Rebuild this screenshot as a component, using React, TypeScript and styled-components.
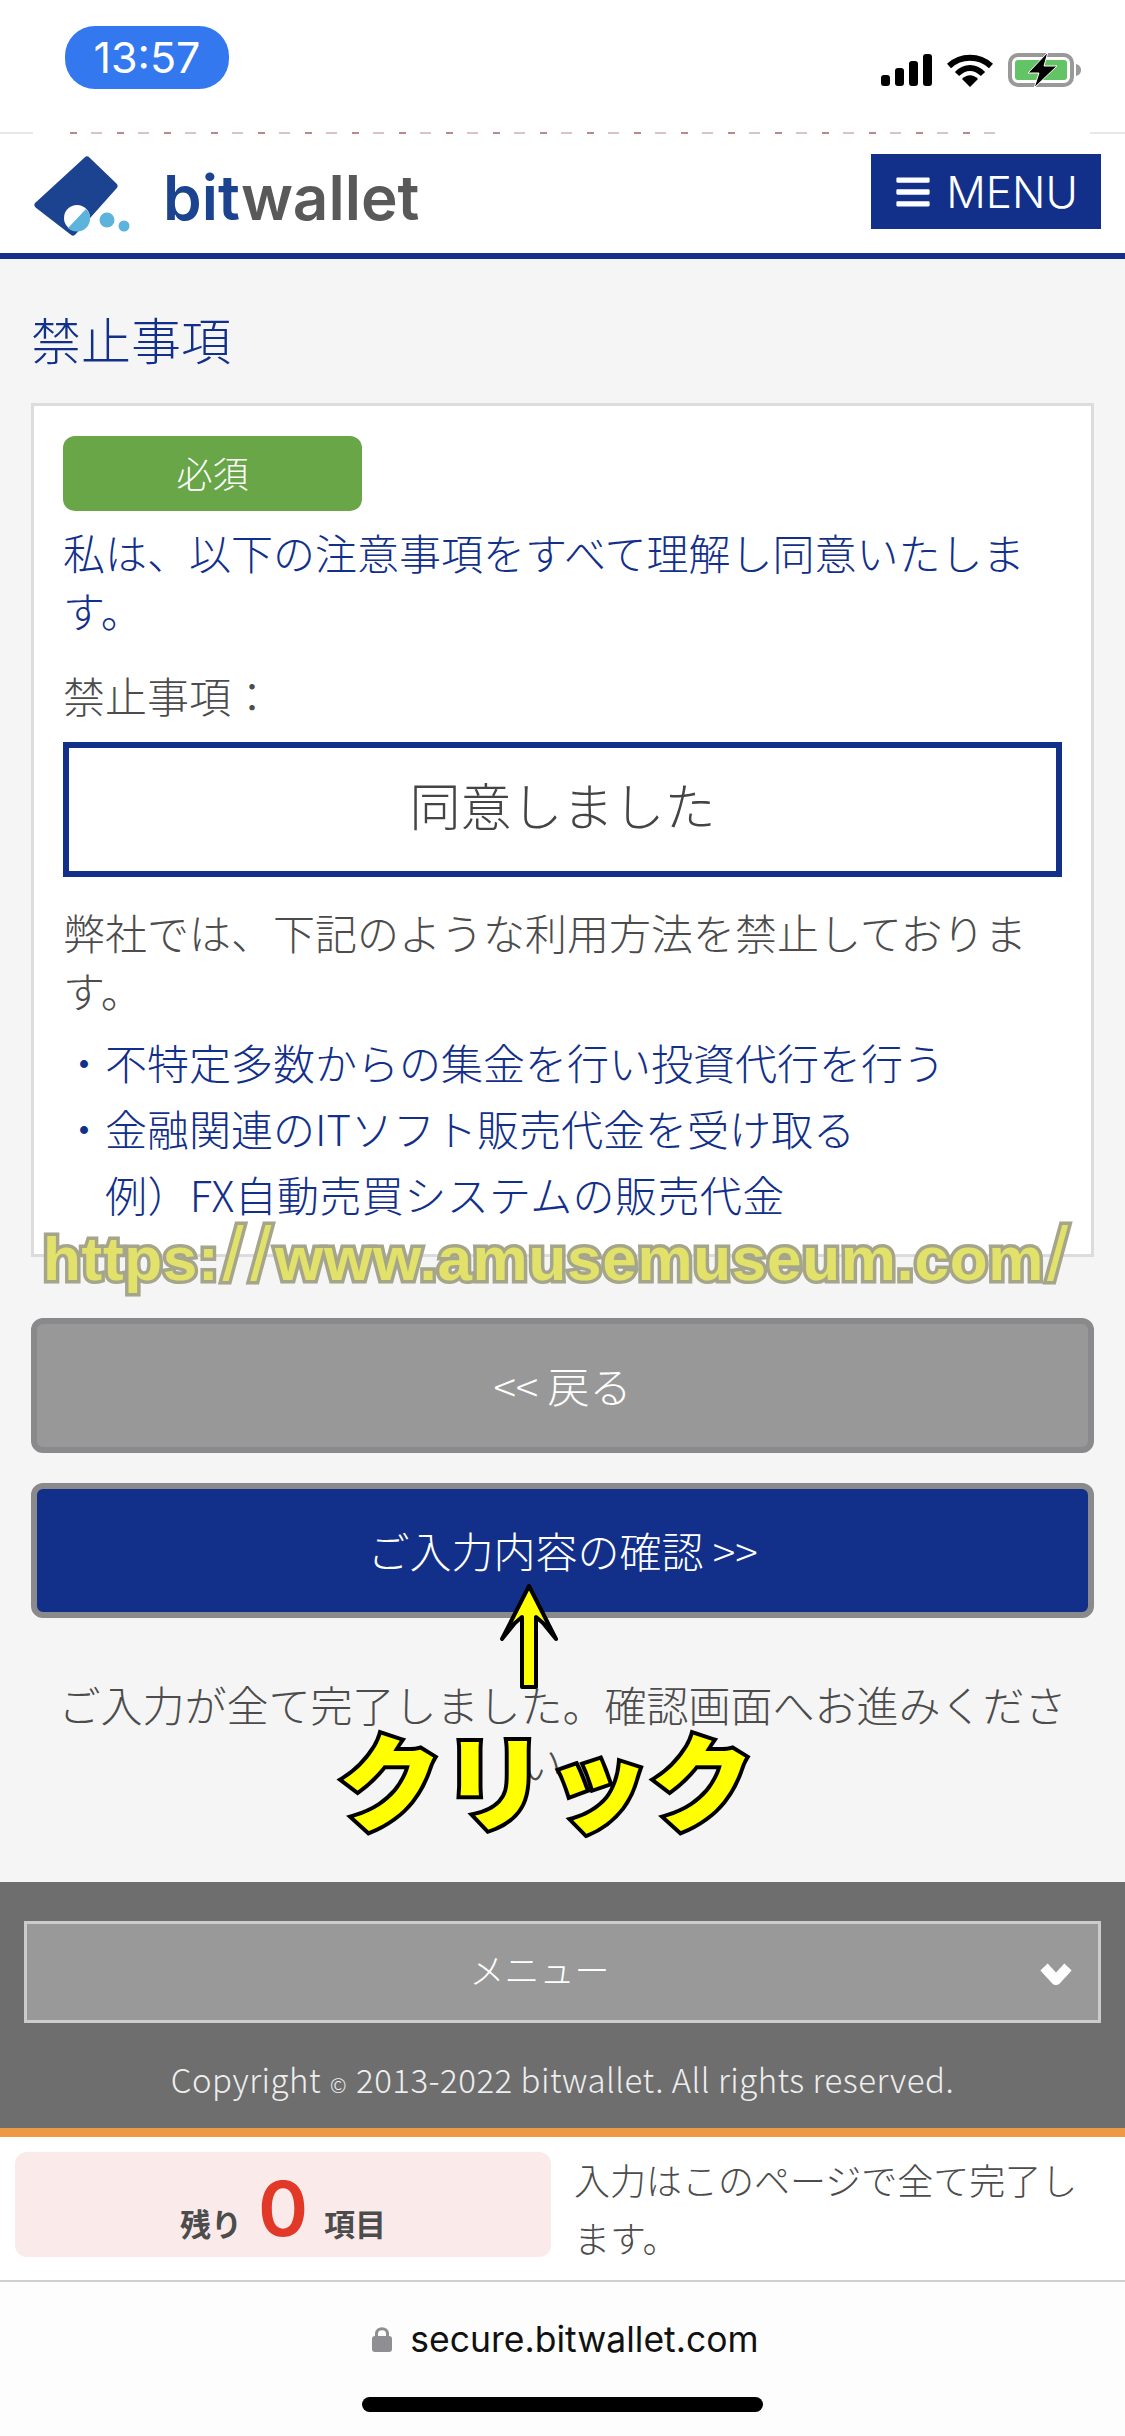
import React from "react"
import styled, { createGlobalStyle } from "styled-components"
import { FaBars } from "react-icons/fa"

const NAVY = "#12308a"
const TEXT_GRAY = "#4c4c4c"
const JP = `"Noto Sans CJK JP", "Noto Sans", sans-serif`

const GlobalStyle = createGlobalStyle`
  html, body {
    margin: 0;
    padding: 0;
    background: #ffffff;
  }
  * {
    box-sizing: border-box;
  }
`

const Page = styled.div`
  width: 1125px;
  height: 2436px;
  display: flex;
  flex-direction: column;
  overflow: hidden;
  font-family: ${JP};
  font-weight: 300;
  color: ${TEXT_GRAY};
  background: #ffffff;
`

const StatusBar = styled.div`
  height: 132px;
  flex: none;
  display: flex;
  justify-content: space-between;
  align-items: flex-start;
  padding: 26px 43px 0 65px;
`

const TimePill = styled.div`
  width: 164px;
  height: 63px;
  border-radius: 30px;
  background: #3478f0;
  color: #ffffff;
  font-family: Inter, sans-serif;
  font-size: 43px;
  font-weight: 400;
  line-height: 63px;
  text-align: center;
`

const StatusIcons = styled.div`
  display: flex;
  align-items: center;
  gap: 15px;
  margin-top: 26px;
`

const ScrollStrip = styled.div`
  height: 2px;
  flex: none;
  background:
    repeating-linear-gradient(90deg, #b98a8a 0 7px, #ffffff 7px 21px, #d8c4c4 21px 32px, #ffffff 32px 47px)
      70px 0 / 930px 2px no-repeat,
    linear-gradient(90deg, #e8e8e8 0 33px, #ffffff 33px 1090px, #e8e8e8 1090px);
`

const Header = styled.header`
  height: 125px;
  flex: none;
  display: flex;
  justify-content: space-between;
  align-items: flex-start;
  padding: 20px 24px 0 33px;
  border-bottom: 6px solid ${NAVY};
  background: #ffffff;
`

const Logo = styled.div`
  display: flex;
  align-items: center;
  gap: 32px;
`

const LogoText = styled.div`
  font-family: Inter, sans-serif;
  font-size: 62px;
  font-weight: 600;
  line-height: 60px;
  margin-top: 3px;
  color: #595959;
`

const LogoBit = styled.span`
  color: #1c4390;
`

const MenuButton = styled.div`
  width: 230px;
  height: 75px;
  background: ${NAVY};
  color: #ffffff;
  display: flex;
  align-items: center;
  justify-content: center;
  gap: 14px;
  font-family: Inter, sans-serif;
  font-size: 44px;
  font-weight: 300;
`

const Main = styled.main`
  position: relative;
  height: 1623px;
  flex: none;
  padding: 49px 31px 0;
  background: #f5f5f5;
`

const Title = styled.h1`
  margin: 0 0 35px 0;
  font-size: 50px;
  line-height: 60px;
  font-weight: 300;
  color: ${NAVY};
`

const Card = styled.section`
  height: 854px;
  padding: 30px 29px 0;
  overflow: hidden;
  border: 3px solid #dcdcdc;
  background: #ffffff;
  font-size: 42px;
  line-height: 58px;
`

const RequiredBadge = styled.div`
  width: 299px;
  height: 75px;
  border-radius: 12px;
  background: #68a648;
  color: #ffffff;
  font-size: 36px;
  line-height: 72px;
  text-align: center;
`

const Notice = styled.p<{ $top: number; $color?: string }>`
  margin: ${p => p.$top}px 0 0;
  color: ${p => p.$color || TEXT_GRAY};
`

const AgreedBox = styled.div`
  height: 135px;
  margin-top: 18px;
  border: 6px solid ${NAVY};
  background: #ffffff;
  font-size: 51px;
  line-height: 113px;
  text-align: center;
  color: #444444;
`

const RuleList = styled.ul`
  list-style: none;
  margin: 10px 0 0;
  padding: 0;
  line-height: 66px;
  color: ${NAVY};
`

const RuleItem = styled.li`
  position: relative;
  padding-left: 42px;

  &::before {
    content: "・";
    position: absolute;
    left: 0;
    top: 0;
  }
`

const SubRuleItem = styled.li`
  padding-left: 42px;
  letter-spacing: 0.4px;
`

const ActionButton = styled.div<{ $primary?: boolean; $top: number }>`
  height: 135px;
  margin-top: ${p => p.$top}px;
  border-radius: 12px;
  border: 6px solid #8a8a8c;
  background: ${p => (p.$primary ? NAVY : "#989898")};
  color: #ffffff;
  font-size: 42px;
  line-height: 121px;
  text-align: center;
`

const CompleteText = styled.p`
  width: 1030px;
  margin: 57px auto 0;
  font-size: 42px;
  line-height: 58px;
  text-align: center;
  color: ${TEXT_GRAY};
`

const Watermark = styled.div`
  position: absolute;
  left: 43px;
  top: 960px;
  font-family: "Liberation Sans", sans-serif;
  font-size: 62px;
  font-weight: 700;
  line-height: 70px;
  letter-spacing: 0.7px;
  white-space: nowrap;
  color: #e2e26a;
  -webkit-text-stroke: 7px #a5a58c;
  paint-order: stroke fill;
`

const WatermarkSlash = styled.span`
  font-size: 76px;
  font-weight: 400;
  margin: 0 3px;
`

const UpArrow = styled.svg`
  position: absolute;
  left: 498px;
  top: 1324px;
`

const ClickLabel = styled.div`
  position: absolute;
  left: 338px;
  top: 1454px;
  font-family: ${JP};
  font-size: 104px;
  font-weight: 900;
  line-height: 130px;
  white-space: nowrap;
  color: #ffff00;
  -webkit-text-stroke: 8px #000000;
  paint-order: stroke fill;
`

const Footer = styled.footer`
  height: 255px;
  flex: none;
  padding: 39px 24px 0;
  background: #6e6e6e;
  border-bottom: 9px solid #ee9a45;
  color: #eeeeee;
`

const MenuSelect = styled.div`
  position: relative;
  height: 102px;
  padding-right: 46px;
  border: 3px solid #cccccc;
  background: #999999;
  color: #ffffff;
  font-size: 35px;
  line-height: 90px;
  text-align: center;
`

const SelectChevron = styled.svg`
  position: absolute;
  right: 24px;
  top: 38px;
`

const Copyright = styled.div`
  margin-top: 35px;
  font-size: 33px;
  line-height: 42px;
  letter-spacing: 0.5px;
  text-align: center;
`

const CopyrightMark = styled.span`
  font-size: 20px;
  margin: 0 9px;
`

const Summary = styled.div`
  height: 145px;
  flex: none;
  display: flex;
  gap: 23px;
  padding: 15px 15px 0;
  border-bottom: 2px solid #cfcfcf;
  background: #ffffff;
`

const RemainBox = styled.div`
  width: 536px;
  height: 105px;
  display: flex;
  justify-content: center;
  align-items: baseline;
  gap: 16px;
  border-radius: 12px;
  background: #faeaea;
  font-size: 31px;
  font-weight: 700;
  line-height: 112px;
`

const RemainCount = styled.span`
  font-family: Inter, sans-serif;
  font-size: 76px;
  font-weight: 600;
  color: #e23828;
`

const SummaryNote = styled.p`
  width: 520px;
  margin: -2px 0 0;
  font-size: 36px;
  line-height: 58px;
`

const AddressBar = styled.div`
  flex: 1;
  display: flex;
  flex-direction: column;
  align-items: center;
  padding-top: 37px;
  background: #fdfdfd;
`

const AddressRow = styled.div`
  display: flex;
  align-items: center;
  gap: 18px;
  height: 40px;
  padding-left: 6px;
  font-family: Inter, sans-serif;
  font-size: 35.5px;
  font-weight: 400;
  color: #111111;
`

const HomeIndicator = styled.div`
  width: 401px;
  height: 15px;
  margin-top: 38px;
  border-radius: 8px;
  background: #000000;
`

const SignalIcon = () => (
  <svg width="51" height="32" viewBox="0 0 51 32">
    <rect x="0" y="21" width="9" height="11" rx="3" fill="#000" />
    <rect x="14" y="14" width="9" height="18" rx="3" fill="#000" />
    <rect x="28" y="7" width="9" height="25" rx="3" fill="#000" />
    <rect x="42" y="0" width="9" height="32" rx="3" fill="#000" />
  </svg>
)

const WifiIcon = () => (
  <svg width="46" height="33" viewBox="0 0 46 33">
    <path d="M2 12 C14 1 32 1 44 12" fill="none" stroke="#000" strokeWidth="6" />
    <path d="M10 20 C18 12 28 12 36 20" fill="none" stroke="#000" strokeWidth="6" />
    <path d="M15 25 C20 20 26 20 31 25 L23 33 Z" fill="#000" />
  </svg>
)

const BatteryIcon = () => (
  <svg width="74" height="36" viewBox="0 0 74 36">
    <rect x="2" y="3" width="62" height="30" rx="8" fill="none" stroke="#999" strokeWidth="4" />
    <rect x="7" y="8" width="52" height="20" rx="3" fill="#63c466" />
    <path d="M68 12 C72 13 73 16 73 18 C73 20 72 23 68 24 Z" fill="#999" />
    <path d="M40 0 L20 21 L31 21 L26 36 L49 14 L36 14 Z" fill="#000" stroke="#fff" strokeWidth="1" />
  </svg>
)

const LogoMark = () => (
  <svg width="98" height="84" viewBox="0 0 98 84">
    <path
      d="M54 6 L81 32 L40 78 L5 51 Z"
      fill="#1c4390"
      stroke="#1c4390"
      strokeWidth="7"
      strokeLinejoin="round"
    />
    <circle cx="44" cy="64" r="13" fill="#ffffff" />
    <path d="M53 55 A13 13 0 0 1 35 74 Z" fill="#5cb3dc" />
    <circle cx="74" cy="66" r="7.5" fill="#5cb3dc" />
    <circle cx="91" cy="72" r="5.5" fill="#5cb3dc" />
  </svg>
)

const LockIcon = () => (
  <svg width="20" height="26" viewBox="0 0 20 26">
    <path d="M4.5 12 V7.5 C4.5 1 15.5 1 15.5 7.5 V12" fill="none" stroke="#8e8e93" strokeWidth="3" />
    <rect x="0" y="10" width="20" height="16" rx="3" fill="#8e8e93" />
  </svg>
)

const App = () => (
  <Page>
    <GlobalStyle />
    <StatusBar>
      <TimePill>13:57</TimePill>
      <StatusIcons>
        <SignalIcon />
        <WifiIcon />
        <BatteryIcon />
      </StatusIcons>
    </StatusBar>
    <ScrollStrip />
    <Header>
      <Logo>
        <LogoMark />
        <LogoText>
          <LogoBit>bit</LogoBit>wallet
        </LogoText>
      </Logo>
      <MenuButton>
        <FaBars size={38} />
        MENU
      </MenuButton>
    </Header>
    <Main>
      <Title>禁止事項</Title>
      <Card>
        <RequiredBadge>必須</RequiredBadge>
        <Notice $top={12} $color={NAVY}>
          私は、以下の注意事項をすべて理解し同意いたします。
        </Notice>
        <Notice $top={27}>禁止事項：</Notice>
        <AgreedBox>同意しました</AgreedBox>
        <Notice $top={26}>
          弊社では、下記のような利用方法を禁止しております。
        </Notice>
        <RuleList>
          <RuleItem>不特定多数からの集金を行い投資代行を行う</RuleItem>
          <RuleItem>金融関連のITソフト販売代金を受け取る</RuleItem>
          <SubRuleItem>例）FX自動売買システムの販売代金</SubRuleItem>
        </RuleList>
      </Card>
      <ActionButton $top={61}>&lt;&lt; 戻る</ActionButton>
      <ActionButton $top={30} $primary>
        ご入力内容の確認 &gt;&gt;
      </ActionButton>
      <CompleteText>
        ご入力が全て完了しました。確認画面へお進みください。
      </CompleteText>
      <Watermark>
        https:<WatermarkSlash>/</WatermarkSlash>
        <WatermarkSlash>/</WatermarkSlash>www.amusemuseum.com
        <WatermarkSlash>/</WatermarkSlash>
      </Watermark>
      <UpArrow width="62" height="108" viewBox="0 0 62 108">
        <path
          d="M31 3 L58 56 L45 40 L38 34 L38 104 L24 104 L24 34 L17 40 L4 56 Z"
          fill="#ffff00"
          stroke="#000000"
          strokeWidth="4"
          strokeLinejoin="round"
        />
      </UpArrow>
      <ClickLabel>クリック</ClickLabel>
    </Main>
    <Footer>
      <MenuSelect>
        メニュー
        <SelectChevron width="36" height="26" viewBox="0 0 36 26">
          <path d="M6 5 L18 18 L30 5" fill="none" stroke="#ffffff" strokeWidth="10" strokeLinejoin="round" />
        </SelectChevron>
      </MenuSelect>
      <Copyright>
        Copyright<CopyrightMark>©</CopyrightMark>2013-2022 bitwallet. All rights reserved.
      </Copyright>
    </Footer>
    <Summary>
      <RemainBox>
        残り
        <RemainCount>0</RemainCount>
        項目
      </RemainBox>
      <SummaryNote>入力はこのページで全て完了します。</SummaryNote>
    </Summary>
    <AddressBar>
      <AddressRow>
        <LockIcon />
        secure.bitwallet.com
      </AddressRow>
      <HomeIndicator />
    </AddressBar>
  </Page>
)

export default App
